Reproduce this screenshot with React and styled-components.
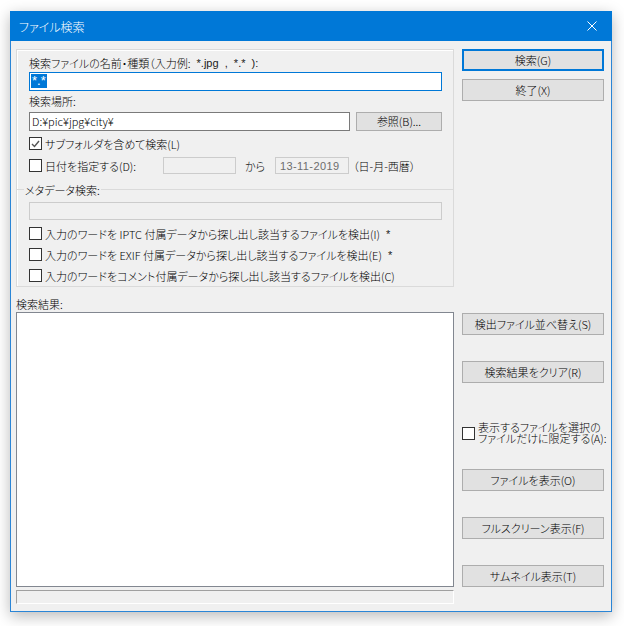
import React from 'react';
import styled, { createGlobalStyle } from 'styled-components';

const GlobalStyle = createGlobalStyle`
    body {
        margin: 0;
        background: #ffffff;
        font-family: "Noto Sans CJK JP", "Liberation Sans", sans-serif;
        font-size: 11px;
        font-weight: 300;
        color: #000;
    }
`

const Page = styled.div`
    padding: 11px 0 0 10px;
    width: 624px;
    height: 626px;
    box-sizing: border-box;
`

const Window = styled.div`
    width: 602px;
    height: 601px;
    box-sizing: border-box;
    border: 1px solid #2a85d6;
    border-top: none;
    background: #f0f0f0;
    box-shadow: 0 4px 14px rgba(0, 0, 0, 0.28);
    display: flex;
    flex-direction: column;
`

const TitleBar = styled.div`
    height: 30px;
    margin: 0 -1px;
    background: #0078d7;
    color: #fff;
    display: flex;
    align-items: center;
    justify-content: space-between;
    padding: 0 9px 0 9px;
    font-size: 12px;
    font-feature-settings: "palt";
`

const CloseIcon = styled.svg`
    width: 10px;
    height: 10px;
    margin-right: 6px;
`

const Client = styled.div`
    flex: 1;
    display: flex;
    padding: 8px 6px 0 5px;
    gap: 8px;
`

const LeftColumn = styled.div`
    width: 438px;
    display: flex;
    flex-direction: column;
`

const RightColumn = styled.div`
    width: 142px;
    display: flex;
    flex-direction: column;
`

const Group = styled.div`
    border: 1px solid #dadada;
    box-shadow: inset 1px 1px 0 #fff;
    height: 238px;
    box-sizing: border-box;
    padding: 5px 11px 0 12px;
    display: flex;
    flex-direction: column;
`

const Label = styled.div`
    height: ${p => p.$h || 16}px;
    display: flex;
    align-items: center;
    font-feature-settings: "palt";
    white-space: pre;
    margin-top: ${p => p.$mt || 0}px;
`

const Ascii = styled.span`
    font-family: "Liberation Sans", sans-serif;
    font-size: 11px;
    color: #222;
    white-space: pre;
`

const Field = styled.div`
    height: ${p => p.$h || 18}px;
    box-sizing: border-box;
    width: ${p => p.$w ? `${p.$w}px` : 'auto'};
    flex: ${p => p.$w ? 'none' : 1};
    margin-top: ${p => p.$mt || 0}px;
    border: 1px solid ${p => p.$focus ? '#0078d7' : p.$disabled ? '#cccccc' : '#7a7a7a'};
    background: ${p => p.$disabled ? '#f0f0f0' : '#ffffff'};
    color: ${p => p.$disabled ? '#6d6d6d' : '#000'};
    display: flex;
    align-items: center;
    padding-left: ${p => p.$pad ?? 2}px;
    white-space: nowrap;
    font-family: ${p => p.$mono ? '"Liberation Sans", sans-serif' : 'inherit'};
    letter-spacing: ${p => p.$mono ? '0.4px' : 'normal'};
`

const Selected = styled.span`
    background: #0078d7;
    color: #fff;
    line-height: 14px;
    padding: 0 1px;
    font-family: "Liberation Sans", sans-serif;
    font-size: 13px;
`

const Row = styled.div`
    display: flex;
    align-items: center;
    height: ${p => p.$h || 20}px;
    margin-top: ${p => p.$mt || 0}px;
    gap: ${p => p.$gap || 0}px;
    white-space: pre;
    font-feature-settings: "palt";
`

const Cell = styled.div`
    width: ${p => p.$w}px;
    flex: none;
    display: flex;
    align-items: center;
`

const Button = styled.div`
    height: ${p => p.$h || 22}px;
    width: ${p => p.$w ? `${p.$w}px` : 'auto'};
    box-sizing: border-box;
    margin-top: ${p => p.$mt || 0}px;
    background: #e1e1e1;
    border: ${p => p.$default ? '2px solid #0078d7' : '1px solid #adadad'};
    display: flex;
    align-items: center;
    justify-content: center;
    white-space: nowrap;
    font-feature-settings: "palt";
`

const Box = styled.div`
    width: 13px;
    height: 13px;
    box-sizing: border-box;
    border: 1px solid #333;
    background: #fff;
    flex: none;
    margin-right: 3px;
    display: flex;
    align-items: center;
    justify-content: center;
`

const Separator = styled.div`
    display: flex;
    align-items: center;
    margin: 7px -11px 0 -12px;
    height: 14px;
    font-feature-settings: "palt";
    &::before {
        content: "";
        width: 7px;
        border-top: 1px solid #dadada;
    }
    &::after {
        content: "";
        flex: 1;
        border-top: 1px solid #dadada;
    }
`

const SeparatorText = styled.span`
    padding: 0 1px;
    color: #000;
`

const ListBox = styled.div`
    height: 275px;
    box-sizing: border-box;
    border: 1px solid #828790;
    background: #fff;
`

const StatusBar = styled.div`
    height: 14px;
    margin-top: 3px;
    box-sizing: border-box;
    border-top: 1px solid #a0a0a0;
    border-left: 1px solid #a0a0a0;
    border-right: 1px solid #fff;
    border-bottom: 1px solid #fff;
`

const CheckWrap = styled.div`
    display: flex;
    align-items: center;
    margin-top: ${p => p.$mt || 0}px;
    margin-right: -5px;
    height: 24px;
`

const TwoLine = styled.div`
    font-feature-settings: "palt";
    line-height: 11px;
    flex: 1;
    word-break: break-all;
`

function Check({ checked }) {
    return (
        <Box>
            {checked && (
                <svg width="9" height="8" viewBox="0 0 9 8">
                    <path d="M1 4 L3.5 6.5 L8 1" fill="none" stroke="#555" strokeWidth="1.4" />
                </svg>
            )}
        </Box>
    )
}

export default function App() {
    return (
        <Page>
            <GlobalStyle />
            <Window>
                <TitleBar>
                    <span>ファイル検索</span>
                    <CloseIcon viewBox="0 0 10 10">
                        <path d="M0.5 0.5 L9.5 9.5 M9.5 0.5 L0.5 9.5" stroke="#fff" strokeWidth="1" />
                    </CloseIcon>
                </TitleBar>
                <Client>
                    <LeftColumn>
                        <Group>
                            <Label>検索ファイルの名前・種類（入力例:<Ascii>  *.jpg  ,  *.*  ):</Ascii></Label>
                            <Field $focus $mt={1} $pad={1}><Selected>*.*</Selected></Field>
                            <Label $h={21}>検索場所:</Label>
                            <Row $h={19} $gap={6}>
                                <Field $h={19}>D:¥pic¥jpg¥city¥</Field>
                                <Button $w={86} $h={19}>参照(B)...</Button>
                            </Row>
                            <Row $mt={3}><Check checked />サブフォルダを含めて検索(L)</Row>
                            <Row $mt={2}>
                                <Cell $w={134}><Check />日付を指定する(D):</Cell>
                                <Field $w={73} $h={17} $disabled />
                                <Cell $w={39} style={{ paddingLeft: 9, boxSizing: 'border-box' }}>から</Cell>
                                <Field $w={74} $h={17} $disabled $mono $pad={4}>13-11-2019</Field>
                                <span style={{ marginLeft: 4 }}>（日-月-西暦）</span>
                            </Row>
                            <Separator><SeparatorText>メタデータ検索:</SeparatorText></Separator>
                            <Field $disabled $mt={5} />
                            <Row $h={21} $mt={3}><Check />入力のワードを IPTC 付属データから探し出し該当するファイルを検出(I)<Ascii>  *</Ascii></Row>
                            <Row $h={21}><Check />入力のワードを EXIF 付属データから探し出し該当するファイルを検出(E)<Ascii>  *</Ascii></Row>
                            <Row $h={21}><Check />入力のワードをコメント付属データから探し出し該当するファイルを検出(C)</Row>
                        </Group>
                        <Label $h={17} $mt={8}>検索結果:</Label>
                        <ListBox />
                        <StatusBar />
                    </LeftColumn>
                    <RightColumn>
                        <Button $default>検索(G)</Button>
                        <Button $mt={8}>終了(X)</Button>
                        <Button $mt={212}>検出ファイル並べ替え(S)</Button>
                        <Button $mt={26}>検索結果をクリア(R)</Button>
                        <CheckWrap $mt={38}>
                            <Check />
                            <TwoLine>表示するファイルを選択のファイルだけに限定する(A):</TwoLine>
                        </CheckWrap>
                        <Button $mt={24}>ファイルを表示(O)</Button>
                        <Button $mt={26}>フルスクリーン表示(F)</Button>
                        <Button $mt={26}>サムネイル表示(T)</Button>
                    </RightColumn>
                </Client>
            </Window>
        </Page>
    )
}
